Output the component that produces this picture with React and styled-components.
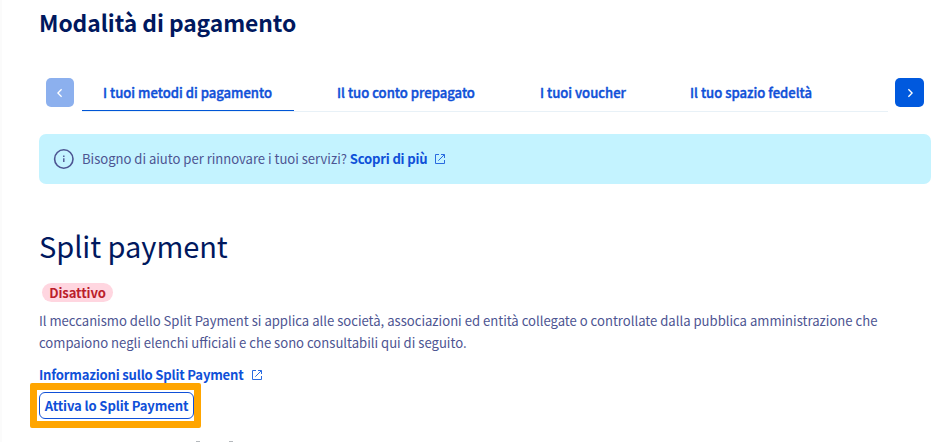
import React from 'react';
import styled, { createGlobalStyle } from 'styled-components';

const Global = createGlobalStyle`
  * { box-sizing: border-box; }
  body { margin: 0; background: #fff; overflow: hidden; }
  button { font: inherit; cursor: pointer; }
`;
const Page = styled.main`
  display: flex;
  flex-direction: column;
  align-items: flex-start;
  width: 937px;
  height: 442px;
  overflow: hidden;
  padding: 8px 6px 0 37px;
  border-left: 2px solid #fbfbfb;
  font: 400 13.1px/22px "Noto Sans CJK SC", "Noto Sans", sans-serif;
  color: #4d5592;
`;
const Title = styled.h1`
  margin: -1px 0 1px;
  font-size: 22.8px;
  line-height: 32px;
  font-weight: 700;
  letter-spacing: -0.05px;
  color: #00185e;
  white-space: nowrap;
`;
const TabBar = styled.nav`
  display: flex;
  align-items: flex-start;
  width: 885px;
  height: 34px;
  margin: 38px 0 22px 7px;
`;
const ArrowButton = styled.button`
  display: flex;
  align-items: center;
  justify-content: center;
  flex: none;
  width: ${(p) => (p.disabled ? 28 : 29)}px;
  height: 29px;
  padding: 0;
  border: 0;
  border-radius: 5px;
  color: #fff;
  background: ${(p) => (p.disabled ? '#8cb0ee' : '#0059de')};
`;
const TabList = styled.div`
  display: flex;
  flex: none;
  gap: 22px;
  width: 806px;
  height: 34px;
  margin: 0 7px 0 8px;
  border-bottom: 1px solid #e8f1f7;
`;
const Tab = styled.a`
  height: 33px;
  padding: 4px 21px 0;
  width: ${(p) => p.$width}px;
  border-bottom: 1px solid ${(p) => (p.$active ? '#0055d6' : 'transparent')};
  font-weight: 500;
  -webkit-text-stroke: 0.4px #0f50d8;
  color: #0f50d8;
  white-space: nowrap;
`;
const Banner = styled.section`
  display: flex;
  align-items: center;
  width: 892px;
  height: 50px;
  padding-left: 14px;
  border-radius: 7px;
  background: #c4f3ff;
  white-space: pre;
`;
const BannerText = styled.span`
  margin-left: 7px;
  letter-spacing: -0.02px;
`;
const Link = styled.a`
  display: inline-flex;
  align-items: center;
  gap: 8px;
  font-weight: 700;
  letter-spacing: -0.2px;
  color: #0f50d8;
  white-space: nowrap;
`;
const Heading = styled.h2`
  margin: 40px 0 2px;
  font-size: 29px;
  line-height: 42px;
  font-weight: 400;
  letter-spacing: -0.05px;
  color: #00185e;
`;
const Badge = styled.span`
  width: 71px;
  height: 19px;
  margin: 15px 0 8px 3px;
  border-radius: 10px;
  background: #ffd6e0;
  color: #bb1e2c;
  font-weight: 700;
  line-height: 19px;
  letter-spacing: -0.12px;
  text-align: center;
`;
const Description = styled.p`
  margin: 0 0 10px;
  white-space: nowrap;
`;
const Highlight = styled.div`
  position: relative;
  margin-top: 6px;
  &::after {
    content: '';
    position: absolute;
    inset: -9px -7px -9px -9px;
    border: 7px solid #ffa500;
    border-radius: 2px;
    pointer-events: none;
  }
`;
const OutlineButton = styled.button`
  display: block;
  width: 155px;
  height: 27px;
  padding: 0;
  border: 1px solid #0f50d8;
  border-radius: 6px;
  background: #fff;
  color: #0f50d8;
  font-weight: 700;
  letter-spacing: -0.14px;
  white-space: nowrap;
`;
const NextSection = styled.div`
  display: flex;
  gap: 29px;
  margin: 22px 0 0 157px;
`;
const Stem = styled.i`
  width: 4px;
  height: 1px;
  background: #b5b9bd;
`;

const Chevron = ({ left }) => (
  <svg width="12" height="12" viewBox="0 0 12 12" fill="none" stroke="currentColor" strokeWidth="1.3">
    <path d={left ? 'M7.6 2.2 3.9 6l3.7 3.8' : 'M4.4 2.2 8.1 6 4.4 9.8'} />
  </svg>
);
const InfoIcon = () => (
  <svg width="22" height="22" viewBox="0 0 22 22" fill="none" stroke="#4d5592">
    <circle cx="10.8" cy="11" r="9.2" strokeWidth="1.6" />
    <path d="M10.8 10.2v3.7M10.8 7.6v1.3" strokeWidth="1.4" />
  </svg>
);
const ExternalIcon = () => (
  <svg width="10" height="10" viewBox="0 0 10 10" fill="none" stroke="#2a6be0" strokeWidth="1">
    <path d="M4 .5H.5v9h9V6M6 .5h3.5V4M9.3.7 3.3 6.7" />
  </svg>
);

const TABS = [
  ['I tuoi metodi di pagamento', 212],
  ['Il tuo conto prepagato', 181],
  ['I tuoi voucher', 128],
  ['Il tuo spazio fedeltà', 164],
];

export default function App() {
  return (
    <Page>
      <Global />
      <Title>Modalità di pagamento</Title>
      <TabBar>
        <ArrowButton disabled aria-label="Precedente"><Chevron left /></ArrowButton>
        <TabList>
          {TABS.map(([label, width], i) => (
            <Tab key={label} $width={width} $active={i === 0}>{label}</Tab>
          ))}
        </TabList>
        <ArrowButton aria-label="Successivo"><Chevron /></ArrowButton>
      </TabBar>
      <Banner>
        <InfoIcon />
        <BannerText>Bisogno di aiuto per rinnovare i tuoi servizi? </BannerText>
        <Link>Scopri di più<ExternalIcon /></Link>
      </Banner>
      <Heading>Split payment</Heading>
      <Badge>Disattivo</Badge>
      <Description>
        Il meccanismo dello Split Payment si applica alle società, associazioni ed entità collegate o controllate dalla pubblica amministrazione che
        <br />
        compaiono negli elenchi ufficiali e che sono consultabili qui di seguito.
      </Description>
      <Link>Informazioni sullo Split Payment<ExternalIcon /></Link>
      <Highlight>
        <OutlineButton>Attiva lo Split Payment</OutlineButton>
      </Highlight>
      <NextSection><Stem /><Stem /></NextSection>
    </Page>
  );
}
